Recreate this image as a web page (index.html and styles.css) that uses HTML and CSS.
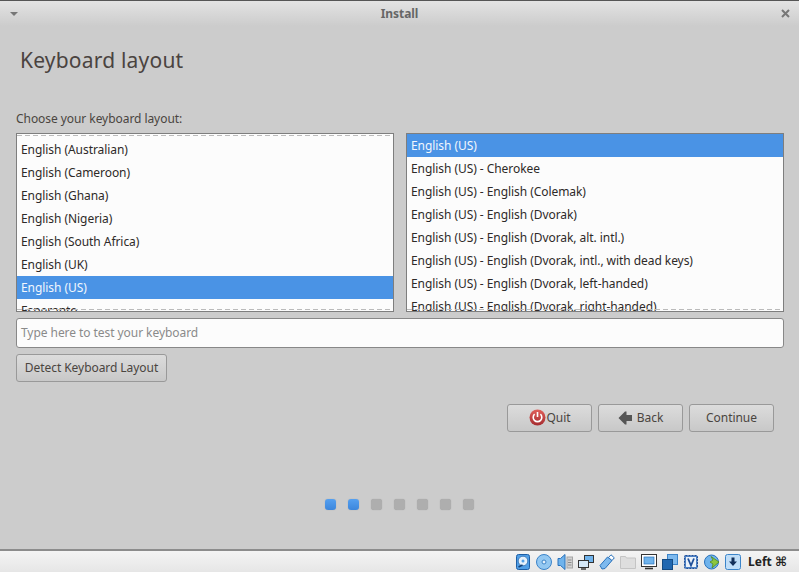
FILE: index.html
```html
<!DOCTYPE html>
<html lang="en">
<head>
    <meta charset="UTF-8">
    <title>Install</title>
    <link rel="stylesheet" href="styles.css">
</head>
<body>
    <div class="window">
        <div class="titlebar">
            <span class="menu-arrow"></span>
            <span class="title">Install</span>
            <svg class="close" width="9" height="9" viewBox="0 0 9 9"><path d="M1 1l7 7M8 1l-7 7" stroke="#777" stroke-width="2" fill="none"/></svg>
        </div>
        <div class="content">
            <h1>Keyboard layout</h1>
            <div class="choose">Choose your keyboard layout:</div>
            <div class="lists">
                <div class="list">
                    <div class="row">English (Australian)</div>
                    <div class="row">English (Cameroon)</div>
                    <div class="row">English (Ghana)</div>
                    <div class="row">English (Nigeria)</div>
                    <div class="row">English (South Africa)</div>
                    <div class="row">English (UK)</div>
                    <div class="row selected">English (US)</div>
                    <div class="row">Esperanto</div>
                </div>
                <div class="list list-right">
                    <div class="row selected">English (US)</div>
                    <div class="row">English (US) - Cherokee</div>
                    <div class="row">English (US) - English (Colemak)</div>
                    <div class="row">English (US) - English (Dvorak)</div>
                    <div class="row">English (US) - English (Dvorak, alt. intl.)</div>
                    <div class="row">English (US) - English (Dvorak, intl., with dead keys)</div>
                    <div class="row">English (US) - English (Dvorak, left-handed)</div>
                    <div class="row">English (US) - English (Dvorak, right-handed)</div>
                </div>
            </div>
            <div class="test-entry">Type here to test your keyboard</div>
            <div class="btn detect">Detect Keyboard Layout</div>
            <div class="actions">
                <div class="btn action">
                    <svg width="17" height="17" viewBox="0 0 17 17">
                        <defs><linearGradient id="quit" x1="0" y1="0" x2="0" y2="1"><stop offset="0" stop-color="#e0605a"/><stop offset="1" stop-color="#a52c30"/></linearGradient></defs>
                        <circle cx="8.5" cy="8.5" r="8" fill="url(#quit)"/>
                        <path d="M5.6 5.2a4.3 4.3 0 1 0 5.8 0" stroke="#fff" stroke-width="1.6" fill="none"/>
                        <path d="M8.5 3v5" stroke="#fff" stroke-width="1.6"/>
                    </svg>
                    <span>Quit</span>
                </div>
                <div class="btn action">
                    <svg width="15" height="14" viewBox="0 0 15 14"><path d="M0.5 7L7 0.5H8.5V4H14V10H8.5V13.5H7Z" fill="#555"/></svg>
                    <span class="back-label">Back</span>
                </div>
                <div class="btn action">Continue</div>
            </div>
            <div class="dots">
                <span class="dot on"></span>
                <span class="dot on"></span>
                <span class="dot"></span>
                <span class="dot"></span>
                <span class="dot"></span>
                <span class="dot"></span>
                <span class="dot"></span>
            </div>
        </div>
    </div>
    <div class="statusbar">
        <svg width="16" height="16" viewBox="0 0 16 16"><rect x="1.5" y="0.5" width="13" height="15" rx="2" fill="#4f9ee6" stroke="#1c5ea6"/><circle cx="8" cy="7" r="4.8" fill="#e6f1fb" stroke="#1c5ea6" stroke-width="0.7"/><circle cx="8" cy="7" r="1.5" fill="#4f9ee6"/><path d="M3.5 13l4-2" stroke="#123f75" stroke-width="1.4"/></svg>
        <svg width="16" height="16" viewBox="0 0 16 16"><circle cx="8" cy="8" r="7.5" fill="#93c8f2" stroke="#3b84c9"/><circle cx="8" cy="8" r="2" fill="#e6f1fb" stroke="#3b84c9"/></svg>
        <svg width="16" height="16" viewBox="0 0 16 16"><rect x="10" y="3" width="5.5" height="11" fill="#d2d2d2" stroke="#a5a5a5"/><path d="M11 6h3.5M11 8.5h3.5M11 11h3.5" stroke="#8c8c8c"/><path d="M1 4.5h2.5l4.5-4v15l-4.5-4H1z" fill="#6fb3ec" stroke="#2a72bb"/></svg>
        <svg width="16" height="16" viewBox="0 0 16 16"><rect x="6.5" y="1.5" width="9" height="7" fill="#6fb3ec" stroke="#333"/><rect x="0.5" y="6.5" width="10" height="7" fill="#d5e8f8" stroke="#333"/><path d="M3 15h5" stroke="#333" stroke-width="1.4"/></svg>
        <svg width="16" height="16" viewBox="0 0 16 16"><path d="M1 11.5L8.5 3 13 6.5 6 14.5 3 15z" fill="#7db9ee" stroke="#2a72bb"/><path d="M9.5 3.5L12 0.8 15.3 3.8 13 6.5z" fill="#fff" stroke="#2a72bb"/></svg>
        <svg width="16" height="16" viewBox="0 0 16 16"><path d="M0.5 2.5h5l1 1.5h9v10.5H0.5z" fill="#dedede" stroke="#c4c4c4"/></svg>
        <svg width="16" height="16" viewBox="0 0 16 16"><rect x="0.5" y="0.5" width="15" height="12" fill="#fff" stroke="#333"/><rect x="3" y="3" width="10" height="7" fill="#6fb3ec" stroke="#2a72bb" stroke-width="0.7"/><path d="M4 14.5h8" stroke="#333" stroke-width="1.6"/></svg>
        <svg width="16" height="16" viewBox="0 0 16 16"><rect x="5.5" y="0.5" width="10" height="10" fill="#7db9ee" stroke="#3b84c9"/><rect x="0.5" y="5.5" width="10" height="10" fill="#2067b0" stroke="#134a82"/></svg>
        <svg width="16" height="16" viewBox="0 0 16 16"><rect x="1.5" y="1.5" width="13" height="13" rx="1" fill="#4a7fc4" stroke="#1f4f9a" stroke-dasharray="2 1"/><rect x="3" y="3" width="10" height="10" fill="#eaf1f9"/><path d="M5 4.5l3 7 3-7" stroke="#1f4f9a" stroke-width="1.8" fill="none"/></svg>
        <svg width="16" height="16" viewBox="0 0 16 16"><circle cx="7.5" cy="8" r="7" fill="#6fb3ec" stroke="#2a72bb"/><path d="M7 2.5L15 8l-7 6 1-4-3-2 3-2z" fill="#8cc63f" stroke="#4f8a1f" stroke-width="0.8"/></svg>
        <svg width="16" height="16" viewBox="0 0 16 16"><rect x="0.5" y="0.5" width="15" height="15" rx="2" fill="#c0def8" stroke="#3b84c9"/><path d="M6.5 3.5h3v4h2.5L8 12 4 7.5h2.5z" fill="#13305a"/></svg>
        <span class="host-key">Left <span class="cmd">&#8984;</span></span>
    </div>
</body>
</html>
```

FILE: styles.css
```css
body {
    margin: 0;
    display: flex;
    flex-direction: column;
    height: 572px;
    overflow: hidden;
    background: #ccc;
    font-family: "Noto Sans", "Open Sans", sans-serif;
    font-size: 12px;
    letter-spacing: -0.06px;
    color: #3c3c3c;
}

.window {
    flex: 1;
    display: flex;
    flex-direction: column;
    min-height: 0;
    background: #ccc;
    border-top: 1px solid #555;
}

.titlebar {
    display: flex;
    align-items: center;
    justify-content: space-between;
    height: 25px;
    padding: 0 9px 0 10px;
    background: linear-gradient(#e3e3e3, #ccc);
    flex-shrink: 0;
}

.menu-arrow {
    width: 0;
    height: 0;
    border-left: 4px solid transparent;
    border-right: 4px solid transparent;
    border-top: 4px solid #777;
}

.title {
    font-weight: 700;
    color: #666;
}

.content {
    flex: 1;
    display: flex;
    flex-direction: column;
    padding: 0 15px 0 16px;
    min-height: 0;
}

h1 {
    margin: 19px 0 0 4px;
    height: 30px;
    line-height: 30px;
    font-size: 21px;
    font-weight: 400;
    color: #4a4340;
    letter-spacing: 0.2px;
}

.choose {
    margin-top: 35px;
    height: 18px;
    line-height: 18px;
    color: #4a4540;
}

.lists {
    display: flex;
    gap: 12px;
    margin-top: 5px;
}

.list {
    flex: 0 0 378px;
    height: 179px;
    box-sizing: border-box;
    border: 1px solid #7e7e7e;
    background: #fcfcfc;
    overflow: hidden;
    position: relative;
    padding-top: 4px;
    color: #2e2a28;
}

.list::before, .list::after {
    content: "";
    position: absolute;
    left: 0;
    right: 0;
    height: 1px;
    background: repeating-linear-gradient(90deg, #bbb 0 5px, transparent 5px 8px);
    z-index: 1;
}

.list::before {
    top: 1px;
}

.list::after {
    bottom: 1px;
}

.list-right {
    flex: 1;
    padding-top: 0;
}

.list-right::before {
    display: none;
}

.row {
    height: 23px;
    line-height: 23px;
    padding-left: 4px;
    white-space: nowrap;
}

.selected {
    background: #4a93e5;
    color: #f2f7fd;
}

.test-entry {
    margin-top: 6px;
    height: 28px;
    line-height: 28px;
    padding-left: 4px;
    border: 1px solid #888;
    border-radius: 3px;
    background: #fcfcfc;
    color: #8a8a8a;
}

.btn {
    box-sizing: border-box;
    height: 28px;
    padding-bottom: 1px;
    display: flex;
    align-items: center;
    justify-content: center;
    border: 1px solid #999;
    border-radius: 3px;
    background: linear-gradient(#dcdcdc, #c8c8c8);
    color: #4a4540;
}

.detect {
    width: 151px;
    margin-top: 6px;
}

.actions {
    display: flex;
    justify-content: flex-end;
    gap: 6px;
    margin-top: 22px;
    padding-right: 10px;
}

.action {
    width: 85px;
    gap: 1px;
}

.back-label {
    margin-left: 3px;
}

.dots {
    display: flex;
    justify-content: center;
    gap: 12px;
    margin-top: 67px;
    padding-right: 2px;
}

.dot {
    width: 11px;
    height: 11px;
    border-radius: 3px;
    background: #aeaeae;
    box-shadow: 0 0 1px #999;
}

.dot.on {
    background: linear-gradient(#55a0f0, #3c86dc);
}

.statusbar {
    flex-shrink: 0;
    box-sizing: border-box;
    height: 23px;
    display: flex;
    align-items: center;
    justify-content: flex-end;
    gap: 5px;
    padding-right: 12px;
    border-top: 2px solid #8c8c8c;
    background: linear-gradient(#f4f4f4, #e6e6e6);
}

.host-key {
    margin-left: 2px;
    font-size: 12px;
    font-weight: 700;
    letter-spacing: 0;
    color: #222;
}

.cmd {
    font-family: "DejaVu Sans", sans-serif;
    font-size: 13px;
}
```
